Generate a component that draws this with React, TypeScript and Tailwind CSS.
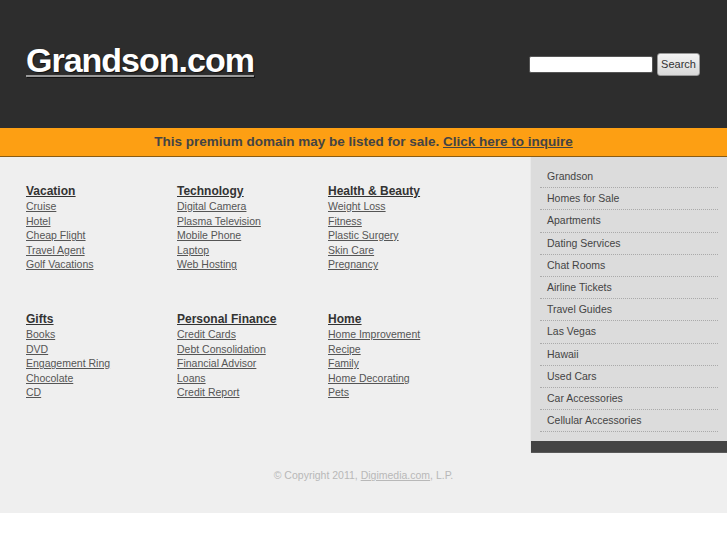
import React from "react";

const groups: { title: string; links: string[] }[] = [
  { title: "Vacation", links: ["Cruise", "Hotel", "Cheap Flight", "Travel Agent", "Golf Vacations"] },
  { title: "Technology", links: ["Digital Camera", "Plasma Television", "Mobile Phone", "Laptop", "Web Hosting"] },
  { title: "Health & Beauty", links: ["Weight Loss", "Fitness", "Plastic Surgery", "Skin Care", "Pregnancy"] },
  { title: "Gifts", links: ["Books", "DVD", "Engagement Ring", "Chocolate", "CD"] },
  { title: "Personal Finance", links: ["Credit Cards", "Debt Consolidation", "Financial Advisor", "Loans", "Credit Report"] },
  { title: "Home", links: ["Home Improvement", "Recipe", "Family", "Home Decorating", "Pets"] },
];

const related = [
  "Grandson",
  "Homes for Sale",
  "Apartments",
  "Dating Services",
  "Chat Rooms",
  "Airline Tickets",
  "Travel Guides",
  "Las Vegas",
  "Hawaii",
  "Used Cars",
  "Car Accessories",
  "Cellular Accessories",
];

export default function App() {
  return (
    <div className="w-[727px] bg-white font-['Liberation_Sans',Arial,sans-serif]">
      <header className="flex h-[128px] items-center justify-between bg-[#2d2d2d] pl-[26px] pr-[27px]">
        <a
          href="#"
          className="mb-[8px] text-[34px] font-bold leading-[34px] tracking-[-1px] text-white underline decoration-[#999] decoration-2 underline-offset-[3px] [text-shadow:1px_1px_1px_rgba(0,0,0,0.6)]"
        >
          Grandson.com
        </a>
        <form className="flex items-center gap-[4px]" onSubmit={(e) => e.preventDefault()}>
          <input
            type="text"
            className="h-[17px] w-[124px] rounded-[2px] border border-[#555] bg-white px-1 text-[11px] outline-none"
          />
          <button
            type="submit"
            className="h-[23px] w-[43px] rounded-[3px] border border-[#999] bg-gradient-to-b from-[#f4f4f4] to-[#d8d8d8] text-[11px] text-[#333]"
          >
            Search
          </button>
        </form>
      </header>

      <div className="flex h-[29px] items-center justify-center border-b border-[#8a5c14] bg-[#fd9f13] text-[13.5px] font-bold text-[#444]">
        <span>
          This premium domain may be listed for sale.{" "}
          <a href="#" className="underline">
            Click here to inquire
          </a>
        </span>
      </div>

      <main className="bg-[#efefef]">
        <div className="flex">
          <div className="flex-1 pl-[26px] pt-[26px]">
            <div className="grid grid-cols-[151px_151px_151px] gap-y-[39px]">
              {groups.map((g) => (
                <div key={g.title}>
                  <h2 className="text-[12px] font-bold leading-[16px] text-[#333] underline">
                    <a href="#">{g.title}</a>
                  </h2>
                  <ul>
                    {g.links.map((l) => (
                      <li key={l} className="text-[10.5px] leading-[14.6px]">
                        <a href="#" className="text-[#555] underline">
                          {l}
                        </a>
                      </li>
                    ))}
                  </ul>
                </div>
              ))}
            </div>
          </div>

          <aside className="w-[197px] border-l border-[#e9e9e9] bg-[#dcdcdc] pt-[9px]">
            <ul className="ml-[9px] mr-[9px]">
              {related.map((r) => (
                <li
                  key={r}
                  className="border-b border-dotted border-[#aaa] pl-[7px] text-[10.5px] leading-[21.2px] text-[#444]"
                >
                  <a href="#">{r}</a>
                </li>
              ))}
            </ul>
            <div className="mt-[9px] h-[12px] border-b border-[#5a5a5a] bg-[#444]" />
          </aside>
        </div>

        <footer className="h-[60px] pt-[15px] text-center text-[10.5px] leading-[14px] text-[#b8b8b8]">
          © Copyright 2011,{" "}
          <a href="#" className="underline">
            Digimedia.com
          </a>
          , L.P.
        </footer>
      </main>
    </div>
  );
}
